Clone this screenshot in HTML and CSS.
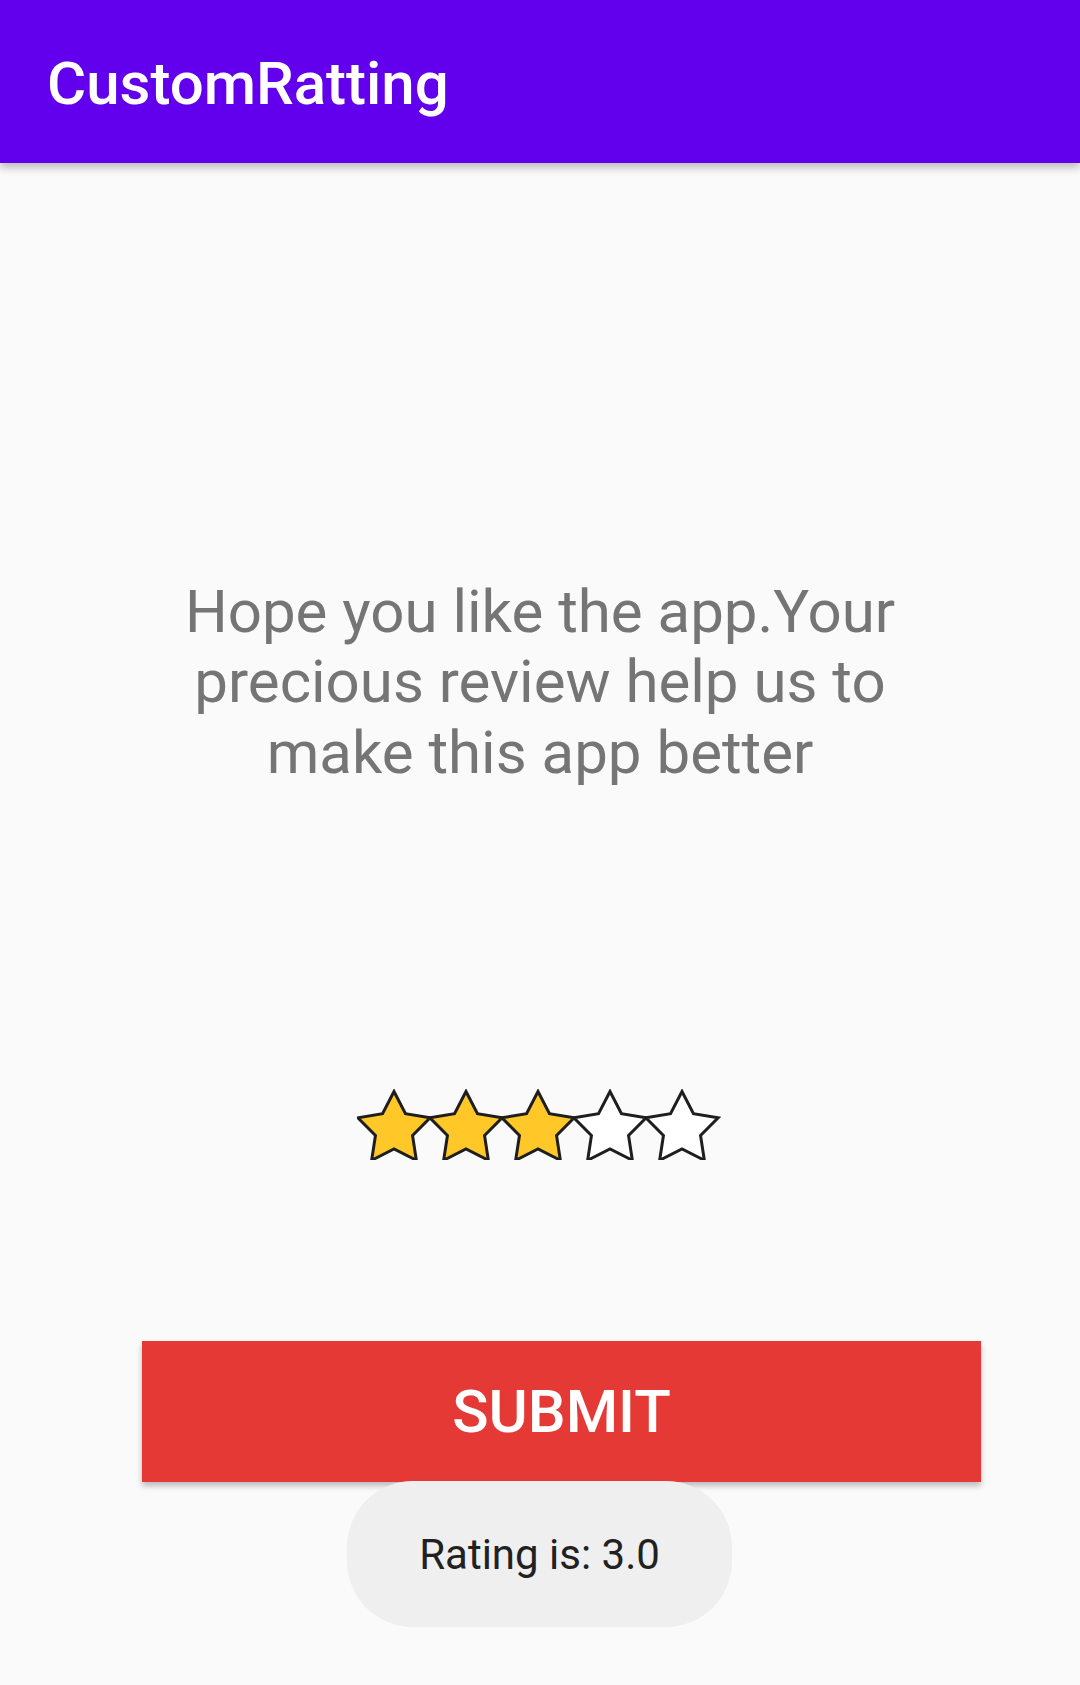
FILE: index.html
```html
<!DOCTYPE html>
<html>
<head>
<meta charset="utf-8">
<link rel="stylesheet" href="styles.css">
</head>
<body>
<header class="appbar"><h1 class="title">CustomRatting</h1></header>
<main class="content">
  <p class="message">Hope you like the app.Your precious review help us to make this app better</p>
  <div class="stars">
    <svg width="366" height="71" viewBox="0 0 366 71">
      <defs>
        <path id="star" d="M0,-38 L11.46,-15.78 L36.14,-11.74 L18.55,6.03 L22.34,30.74 L0,19.5 L-22.34,30.74 L-18.55,6.03 L-36.14,-11.74 L-11.46,-15.78 Z"/>
      </defs>
      <use href="#star" class="star on" transform="translate(37,40.5)"/>
      <use href="#star" class="star on" transform="translate(109,40.5)"/>
      <use href="#star" class="star on" transform="translate(181,40.5)"/>
      <use href="#star" class="star off" transform="translate(253,40.5)"/>
      <use href="#star" class="star off" transform="translate(325,40.5)"/>
    </svg>
  </div>
  <button class="submit">SUBMIT</button>
</main>
<div class="toast">Rating is: 3.0</div>
</body>
</html>
```
FILE: styles.css
```css
html, body {
  margin: 0;
  padding: 0;
}
body {
  background: #fafafa;
  font-family: Roboto, "Noto Sans", sans-serif;
  width: 1080px;
  height: 1685px;
  position: relative;
  overflow: hidden;
}
.appbar {
  height: 163px;
  background: #6200ee;
  box-shadow: 0 4px 9px rgba(0, 0, 0, 0.28);
  display: flex;
  align-items: center;
  padding-left: 47px;
  position: relative;
  z-index: 1;
}
.title {
  margin: 0;
  color: #ffffff;
  font-size: 60px;
  font-weight: 500;
  line-height: 70px;
  position: relative;
  top: 2px;
}
.content {
  display: flex;
  flex-direction: column;
  align-items: center;
  padding-top: 414px;
}
.message {
  margin: 0;
  width: 780px;
  text-align: center;
  font-size: 60px;
  line-height: 70.3px;
  color: #757575;
  font-weight: 400;
}
.stars {
  margin-top: 301px;
  display: flex;
  justify-content: center;
  width: 100%;
  height: 71px;
}
.stars svg {
  display: block;
}
.star {
  stroke: #1e1e1e;
  stroke-width: 3px;
  stroke-linejoin: miter;
}
.star.on {
  fill: #ffc828;
}
.star.off {
  fill: #ffffff;
}
.submit {
  margin-top: 181px;
  margin-left: 142px;
  margin-right: 99px;
  align-self: stretch;
  height: 141px;
  border: none;
  background: #e53935;
  color: #ffffff;
  font-family: Roboto, "Noto Sans", sans-serif;
  font-size: 60px;
  font-weight: 500;
  box-shadow: 0 4px 6px rgba(0, 0, 0, 0.25);
  padding: 0;
}
.toast {
  position: absolute;
  left: 347px;
  top: 1481px;
  width: 385px;
  height: 146px;
  border-radius: 66px;
  background: #efefef;
  color: #212121;
  font-size: 42px;
  display: flex;
  align-items: center;
  justify-content: center;
}
```
